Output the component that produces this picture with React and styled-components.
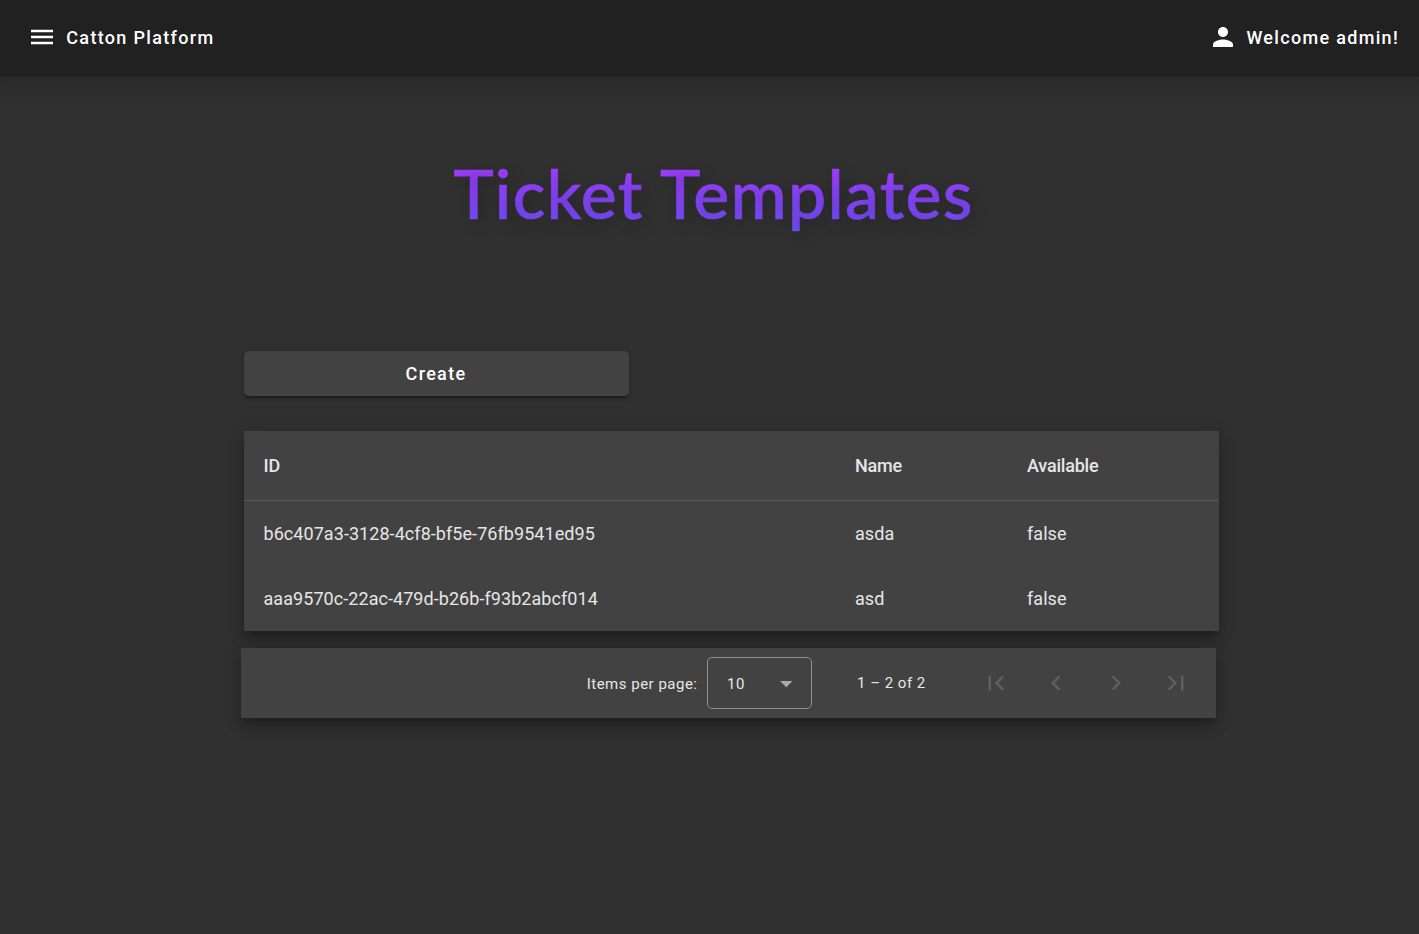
import React from "react";
import styled, { createGlobalStyle } from "styled-components";

const GlobalStyle = createGlobalStyle`
  * { box-sizing: border-box; }
  html, body { margin: 0; height: 100%; background: #303030; }
  body { overflow: hidden; color: #fff; font-family: Roboto, "Liberation Sans", sans-serif; }
`;

const elevation8 = `
  0 6.25px 6.25px -3.75px rgba(0, 0, 0, 0.2),
  0 10px 12.5px 1.25px rgba(0, 0, 0, 0.14),
  0 3.75px 17.5px 2.5px rgba(0, 0, 0, 0.12)`;

const Page = styled.div`
  display: flex;
  flex-direction: column;
  min-height: 934px;
`;

const Toolbar = styled.header`
  display: flex;
  justify-content: space-between;
  align-items: center;
  height: 77px;
  padding: 0 20px 3px 27px;
  background: #212121;
  box-shadow: 0 5px 16px 6px rgba(0, 0, 0, 0.14);
`;

const ToolbarButton = styled.button`
  display: flex;
  align-items: center;
  gap: ${(p) => p.$gap}px;
  padding: 0;
  border: 0;
  background: none;
  color: #fff;
  font: 500 18px/30px Roboto, sans-serif;
  letter-spacing: 1.32px;
`;

const ToolbarLabel = styled.span`
  padding-top: 1px;
`;

const Icon = styled.svg`
  display: block;
  flex: none;
  width: 30px;
  height: 30px;
  fill: currentColor;
`;

const Title = styled.h1`
  align-self: center;
  margin: 75px 0 0 8px;
  font: 500 68px/82px Lato, sans-serif;
  letter-spacing: 1.25px;
  color: transparent;
  background: linear-gradient(#aa38ff, #7050ff);
  background-clip: text;
  -webkit-text-stroke: 0.7px transparent;
  text-shadow: 5px 5px 15px rgba(0, 0, 0, 0.25);
`;

const Content = styled.main`
  width: 975px;
  margin: 117px 0 0 244px;
`;

const CreateButton = styled.button`
  display: block;
  width: 385px;
  height: 45px;
  padding: 1px 1px 0 0;
  border: 0;
  border-radius: 5px;
  background: #424242;
  color: #fff;
  font: 500 18px/44px Roboto, sans-serif;
  letter-spacing: 1.32px;
  box-shadow:
    0 3.75px 1.25px -2.5px rgba(0, 0, 0, 0.2),
    0 2.5px 2.5px 0 rgba(0, 0, 0, 0.14),
    0 1.25px 6.25px 0 rgba(0, 0, 0, 0.12);
`;

const Table = styled.table`
  width: 975px;
  margin-top: 35px;
  table-layout: fixed;
  border-collapse: separate;
  border-spacing: 0;
  background: #424242;
  box-shadow: ${elevation8};
`;

const HeaderCell = styled.th`
  width: ${(p) => p.$width}px;
  height: 70px;
  padding: 0 19.5px;
  border-bottom: 1px solid #5a5a5a;
  color: #e6e6e6;
  text-align: left;
  font-size: 18px;
  font-weight: 500;
  letter-spacing: -0.2px;
`;

const Cell = styled.td`
  height: 65px;
  padding: 0 19.5px;
  color: #e6e6e6;
  font-size: 18px;
  letter-spacing: 0.06px;
`;

const Paginator = styled.nav`
  display: flex;
  justify-content: flex-end;
  align-items: center;
  width: 975px;
  height: 70px;
  margin: 17px 0 0 -3px;
  padding-right: 10px;
  background: #424242;
  color: #e6e6e6;
  font-size: 15px;
  letter-spacing: 0.5px;
  box-shadow: ${elevation8};
`;

const PageSizeLabel = styled.span`
  margin-right: 9.5px;
  padding-top: 2px;
`;

const PageSizeSelect = styled.div`
  display: flex;
  align-items: center;
  justify-content: space-between;
  width: 105px;
  height: 52px;
  padding: 2px 19px 0;
  border: 1px solid #8e8e8e;
  border-radius: 5px;
`;

const Arrow = styled.svg`
  width: 12.5px;
  height: 6.25px;
  margin-top: 1px;
  fill: #a9a9a9;
`;

const RangeLabel = styled.span`
  width: 154px;
  padding-left: 45px;
  white-space: nowrap;
`;

const PageButton = styled.button`
  display: flex;
  align-items: center;
  justify-content: center;
  width: 60px;
  height: 60px;
  padding: 0;
  border: 0;
  background: none;
  color: #5e5e5e;
`;

const columns = [
  { label: "ID", width: 591.5 },
  { label: "Name", width: 172 },
  { label: "Available", width: 211.5 },
];

const templates = [
  { id: "b6c407a3-3128-4cf8-bf5e-76fb9541ed95", name: "asda", available: false },
  { id: "aaa9570c-22ac-479d-b26b-f93b2abcf014", name: "asd", available: false },
];

const pageActions = [
  { label: "First page", path: "M18.41 16.59L13.82 12l4.59-4.59L17 6l-6 6 6 6zM6 6h2v12H6z" },
  { label: "Previous page", path: "M15.41 7.41L14 6l-6 6 6 6 1.41-1.41L10.83 12z" },
  { label: "Next page", path: "M10 6L8.59 7.41 13.17 12l-4.58 4.59L10 18l6-6z" },
  { label: "Last page", path: "M5.59 7.41L10.18 12l-4.59 4.59L7 18l6-6-6-6zM16 6h2v12h-2z" },
];

export default function App() {
  return (
    <Page>
      <GlobalStyle />
      <Toolbar>
        <ToolbarButton $gap={9.3}>
          <Icon viewBox="0 0 24 24"><path d="M3.2 17.8h17.6v-2H3.2zm0-4.8h17.6v-2H3.2zm0-6.8v2h17.6v-2z" /></Icon>
          <ToolbarLabel>Catton Platform</ToolbarLabel>
        </ToolbarButton>
        <ToolbarButton $gap={8.4}>
          <Icon viewBox="0 0 24 24">
            <path d="M12 12c2.21 0 4-1.79 4-4s-1.79-4-4-4-4 1.79-4 4 1.79 4 4 4zm0 2c-2.67 0-8 1.34-8 4v2h16v-2c0-2.66-5.33-4-8-4z" />
          </Icon>
          <ToolbarLabel>Welcome admin!</ToolbarLabel>
        </ToolbarButton>
      </Toolbar>
      <Title>Ticket Templates</Title>
      <Content>
        <CreateButton>Create</CreateButton>
        <Table>
          <thead>
            <tr>
              {columns.map((c) => (
                <HeaderCell key={c.label} $width={c.width}>{c.label}</HeaderCell>
              ))}
            </tr>
          </thead>
          <tbody>
            {templates.map((t) => (
              <tr key={t.id}>
                <Cell>{t.id}</Cell>
                <Cell>{t.name}</Cell>
                <Cell>{String(t.available)}</Cell>
              </tr>
            ))}
          </tbody>
        </Table>
        <Paginator>
          <PageSizeLabel>Items per page:</PageSizeLabel>
          <PageSizeSelect>
            <span>10</span>
            <Arrow viewBox="0 0 10 5"><path d="M0 0h10L5 5z" /></Arrow>
          </PageSizeSelect>
          <RangeLabel>1 – 2 of 2</RangeLabel>
          {pageActions.map((a) => (
            <PageButton key={a.label} aria-label={a.label}>
              <Icon viewBox="0 0 24 24"><path d={a.path} /></Icon>
            </PageButton>
          ))}
        </Paginator>
      </Content>
    </Page>
  );
}
